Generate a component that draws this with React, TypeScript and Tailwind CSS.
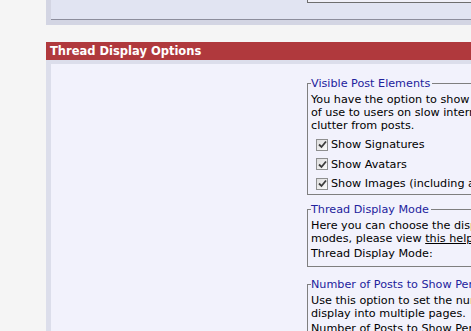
const font = "font-['DejaVu_Sans','Verdana',sans-serif]";

const CheckBox = () => (
  <span className="inline-flex h-[12px] w-[12px] shrink-0 items-center justify-center border border-[#8e8f8f] bg-gradient-to-br from-[#dcdcdc] to-[#fbfbfb]">
    <svg width="9" height="9" viewBox="0 0 9 9">
      <path d="M1 4.5 L3.5 7 L8 1.5" fill="none" stroke="#3c3c3c" strokeWidth="1.8" />
    </svg>
  </span>
);

const CheckRow = ({ label }: { label: string }) => (
  <div className="flex h-[19.5px] items-center gap-[3px] pl-[5px]">
    <CheckBox />
    <span className="whitespace-nowrap">{label}</span>
  </div>
);

const Group = ({
  legend,
  children,
  className = "",
}: {
  legend: string;
  children: React.ReactNode;
  className?: string;
}) => (
  <fieldset className={`border border-[#7f7f7f] pl-[3px] ${className}`}>
    <legend className="pr-[2px] text-[#22229c] leading-[13px] whitespace-nowrap">
      {legend}
    </legend>
    {children}
  </fieldset>
);

export default function App() {
  return (
    <div
      className={`min-h-screen w-[471px] overflow-hidden bg-[#f5f5f5] pl-[46px] text-[11.2px] leading-[13px] text-black ${font}`}
    >
      {/* previous panel */}
      <div className="w-[600px] bg-[#d3d5e3] pl-[5px] pb-[5px]">
        <div className="h-[20px] border-b border-[#8c8d9c] bg-[#e1e4f2] pl-[256px]">
          <div className="h-[3px] border-b border-l border-[#6e6e6e] bg-[#f0f0f8]" />
        </div>
      </div>

      {/* header */}
      <div className="mt-[17px] flex h-[18px] w-[600px] items-center bg-[#b0393d] pl-[4px] text-[11.5px] font-bold text-white">
        Thread Display Options
      </div>

      {/* body */}
      <div className="w-[600px] bg-[#dcdeeb] pl-[5px] pt-[4px]">
        <div className="flex bg-[#f2f2fc] pt-[13px] pb-[20px]">
          <div className="w-[256px] shrink-0" />
          <div className="flex w-[400px] flex-col">
            <Group legend="Visible Post Elements">
              <p className="pt-[3px] whitespace-nowrap">
                You have the option to show or hide various elements that may be
                <br />
                of use to users on slow internet connections or who wish to remove
                <br />
                clutter from posts.
              </p>
              <div className="mt-[3px]">
                <CheckRow label="Show Signatures" />
                <CheckRow label="Show Avatars" />
                <CheckRow label="Show Images (including attachments)" />
              </div>
            </Group>

            <Group legend="Thread Display Mode" className="mt-[8px]">
              <p className="pt-[3px] whitespace-nowrap">
                Here you can choose the display mode for threads. For information on
                <br />
                modes, please view <span className="underline">this help entry</span>.
              </p>
              <div className="mt-[2px] flex h-[19px] items-start whitespace-nowrap">
                Thread Display Mode:
              </div>
            </Group>

            <Group legend="Number of Posts to Show Per Page" className="mt-[11px]">
              <p className="pt-[3px] whitespace-nowrap">
                Use this option to set the number of posts you want to show per
                <br />
                display into multiple pages.
              </p>
              <div className="mt-[2px] whitespace-nowrap">
                Number of Posts to Show Per Page:
              </div>
            </Group>
          </div>
        </div>
      </div>
    </div>
  );
}
